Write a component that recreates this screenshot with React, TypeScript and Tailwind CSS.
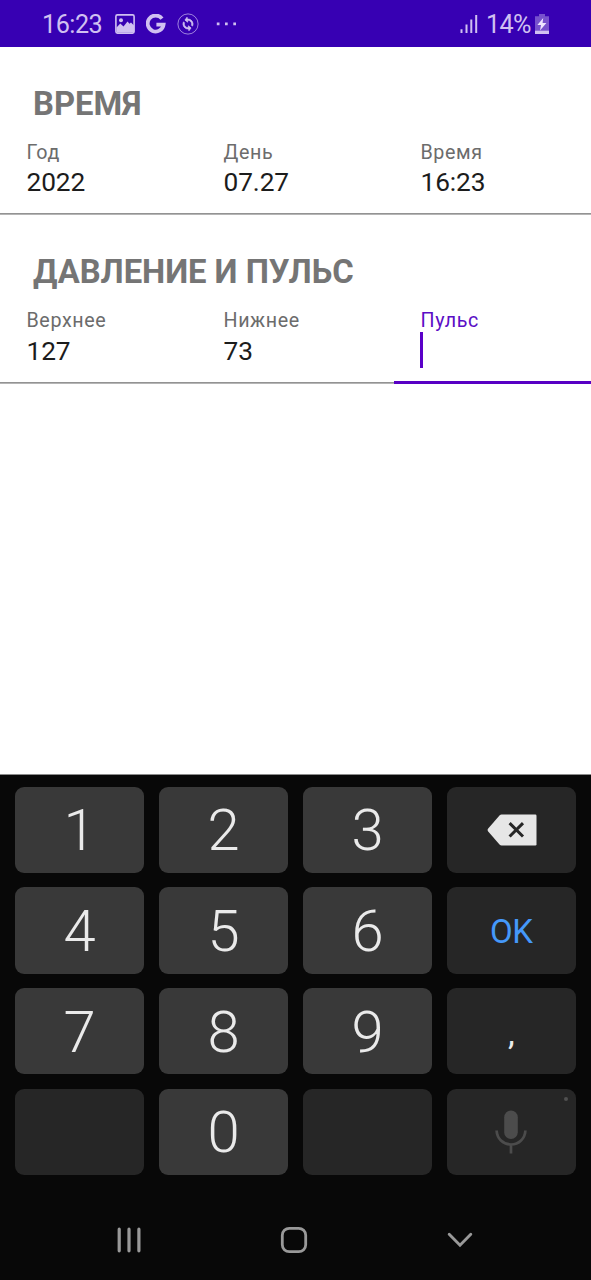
import React from "react";

type FieldData = { label: string; value: string; active?: boolean };

function Field({ label, value, active }: FieldData) {
  return (
    <div className="h-full flex-1 pl-[26.5px]">
      <div
        className={`h-6 text-[19.7px] leading-6 tracking-[0.6px] ${active ? "text-[#5b0ec6]" : "text-[#6c6c6c]"}`}
      >
        {label}
      </div>
      {active ? (
        <div className="-ml-[0.5px] -mt-px h-[36px] w-[3px] bg-[#5a00c8]" />
      ) : (
        <div className="mt-[1.5px] text-[26.27px] leading-8 tracking-[-0.1px] text-[#1c1c1c]">{value}</div>
      )}
    </div>
  );
}

function Section({ title, fields }: { title: string; fields: FieldData[] }) {
  return (
    <section className="flex h-[168.4px] flex-col pt-[36.8px]">
      <h2 className="ml-[33px] h-10 text-[32.8px] font-bold leading-10 tracking-[-0.04px] text-[#757575]">{title}</h2>
      <div className="mt-[17px] flex h-[72.3px]">
        {fields.map((f) => (
          <Field key={f.label} {...f} />
        ))}
      </div>
      <div className="flex h-[2.7px] items-end">
        {fields.map((f) => (
          <div
            key={f.label}
            className={
              f.active
                ? "h-[3px] flex-1 bg-[#5800c4]"
                : "h-[2px] flex-1 border-b border-[#b5b5b5] bg-[#939393]"
            }
          />
        ))}
      </div>
    </section>
  );
}

function StatusBar() {
  return (
    <header className="flex h-[47px] items-center bg-[#3700b3] pl-[42px] pr-[41px] text-[#d0c0f1]">
      <span className="w-[62px] pt-[2px] text-[25.2px] leading-8 tracking-[-0.5px]">16:23</span>
      <svg className="ml-[11px]" width="20" height="20" viewBox="0 0 20 20">
        <rect x="0.9" y="0.9" width="18.2" height="18.2" rx="1.5" fill="none" stroke="currentColor" strokeWidth="1.6" />
        <circle cx="6" cy="6.2" r="2" fill="currentColor" />
        <path d="M1.5 13.5 5.3 9.5 8.5 12.4 12.5 7.6 14.5 9.8 16 8.4 19 11.6V18.5H1.5Z" fill="currentColor" />
      </svg>
      <svg className="ml-[11px]" width="20" height="20" viewBox="0 0 20 20">
        <path d="M16 4.6A8 8 0 1 0 17.6 10.6H10.4" fill="none" stroke="currentColor" strokeWidth="3.8" />
      </svg>
      <svg className="ml-[11px]" width="22" height="22" viewBox="0 0 22 22">
        <circle cx="11" cy="11" r="10.1" fill="none" stroke="currentColor" strokeWidth="0.8" opacity=".85" />
        <path
          transform="translate(11 11) rotate(-8) scale(.62) translate(-12 -12)"
          d="M12 4V1L8 5l4 4V6c3.31 0 6 2.69 6 6 0 1.01-.25 1.97-.7 2.8l1.46 1.46C19.54 15.03 20 13.57 20 12c0-4.42-3.58-8-8-8zm0 14c-3.31 0-6-2.69-6-6 0-1.01.25-1.97.7-2.8L5.24 7.74C4.46 8.97 4 10.43 4 12c0 4.42 3.58 8 8 8v3l4-4-4-4v3z"
          fill="currentColor"
          stroke="currentColor"
          strokeWidth="1.2"
        />
      </svg>
      <svg className="ml-[17px]" width="22" height="4" viewBox="0 0 22 4">
        <path d="M.8.5h2.7v2.7H.8zM9 .5h2.7v2.7H9zM17.3.5H20v2.7h-2.7z" fill="currentColor" />
      </svg>
      <div className="flex-1" />
      <svg width="18" height="20" viewBox="0 0 18 20">
        <path d="M.5 15.3h2V19H.5zM5.5 10.5h2V19h-2zM10.3 5.6h2V19h-2zM15.2 1h2v18h-2z" fill="currentColor" />
      </svg>
      <span className="ml-[8px] w-[45px] pt-[2px] text-[25.2px] leading-8 tracking-[-0.6px]">14%</span>
      <svg className="ml-[4px] mr-[1px]" width="14" height="20" viewBox="0 0 14 20">
        <path d="M4 0h6v2.2h4V20H0V2.2h4Z" fill="currentColor" opacity=".42" />
        <path d="M0 16.7h14V20H0Z" fill="currentColor" />
        <path d="M8.2 4 2.4 11H6l-1 5.4L11.4 9H7.6Z" fill="#eee5ff" />
      </svg>
    </header>
  );
}

function Key({ children, dark }: { children?: React.ReactNode; dark?: boolean }) {
  return (
    <div
      className={`relative flex items-center justify-center rounded-[9px] text-[58px] font-light leading-none text-[#eaeaea] ${dark ? "bg-[#262626]" : "bg-[#393939] pt-px"}`}
    >
      {children}
    </div>
  );
}

function Keyboard() {
  return (
    <div className="flex h-[506px] flex-col border-t border-[#8b8b8b] bg-[#080808]">
      <div className="mx-[15px] mt-[11.7px] grid h-[388.4px] grid-cols-4 grid-rows-4 gap-x-[14.7px] gap-y-[14.4px]">
        <Key>1</Key>
        <Key>2</Key>
        <Key>3</Key>
        <Key dark>
          <svg className="ml-px" width="50" height="32" viewBox="0 0 50 32">
            <path
              d="M14.5.5H48.3q1.2 0 1.2 1.2v28.6q0 1.2-1.2 1.2H14.5q-1 0-2-1L1.2 17.6q-1.2-1.6 0-3.2L12.5 1.5q1-1 2-1Z"
              fill="#e6e6e6"
            />
            <path d="m22.6 9.1 13.4 13.4M36 9.1 22.6 22.5" stroke="#262626" strokeWidth="3" />
          </svg>
        </Key>
        <Key>4</Key>
        <Key>5</Key>
        <Key>6</Key>
        <Key dark>
          <span className="pt-px text-[33px] font-normal leading-none tracking-[-0.3px] text-[#4598fa]">OK</span>
        </Key>
        <Key>7</Key>
        <Key>8</Key>
        <Key>9</Key>
        <Key dark>
          <span className="pt-[3px] text-[34px] font-normal leading-none">,</span>
        </Key>
        <Key dark />
        <Key>0</Key>
        <Key dark />
        <Key dark>
          <svg width="34" height="46" viewBox="0 0 34 46">
            <rect x="10.2" y="1.5" width="13.6" height="28.5" rx="6.8" fill="#4c4c4c" />
            <path
              d="M2.6 21.5C3 29.5 9 35.5 17 35.5S31 29.5 31.4 21.5M17 35.5V44.5"
              fill="none"
              stroke="#4c4c4c"
              strokeWidth="2.7"
            />
          </svg>
          <span className="absolute right-[8px] top-[8px] size-[4.5px] rounded-full bg-[#505050]" />
        </Key>
      </div>
      <nav className="mt-[45px] flex h-[40px] items-center text-[#999999]">
        <svg className="ml-[116px]" width="26" height="26" viewBox="0 0 26 26">
          <path
            d="M3.2 2.2V23.8M13 2.2V23.8M22.9 2.2V23.8"
            stroke="currentColor"
            strokeWidth="3.2"
            strokeLinecap="round"
          />
        </svg>
        <svg className="ml-[138px]" width="28" height="28" viewBox="0 0 28 28">
          <rect x="2.3" y="2.3" width="23.4" height="23.4" rx="7" fill="none" stroke="currentColor" strokeWidth="2.8" />
        </svg>
        <svg className="ml-[138px]" width="28" height="18" viewBox="0 0 28 18">
          <path
            d="m3.2 3.2 10.8 11L24.8 3.2"
            fill="none"
            stroke="currentColor"
            strokeWidth="2.9"
            strokeLinecap="round"
          />
        </svg>
      </nav>
    </div>
  );
}

export default function App() {
  return (
    <div className="flex h-[1280px] w-[591px] flex-col overflow-hidden bg-white font-[Roboto,sans-serif]">
      <StatusBar />
      <main className="flex-1">
        <Section
          title="ВРЕМЯ"
          fields={[
            { label: "Год", value: "2022" },
            { label: "День", value: "07.27" },
            { label: "Время", value: "16:23" },
          ]}
        />
        <Section
          title="ДАВЛЕНИЕ И ПУЛЬС"
          fields={[
            { label: "Верхнее", value: "127" },
            { label: "Нижнее", value: "73" },
            { label: "Пульс", value: "", active: true },
          ]}
        />
      </main>
      <Keyboard />
    </div>
  );
}
